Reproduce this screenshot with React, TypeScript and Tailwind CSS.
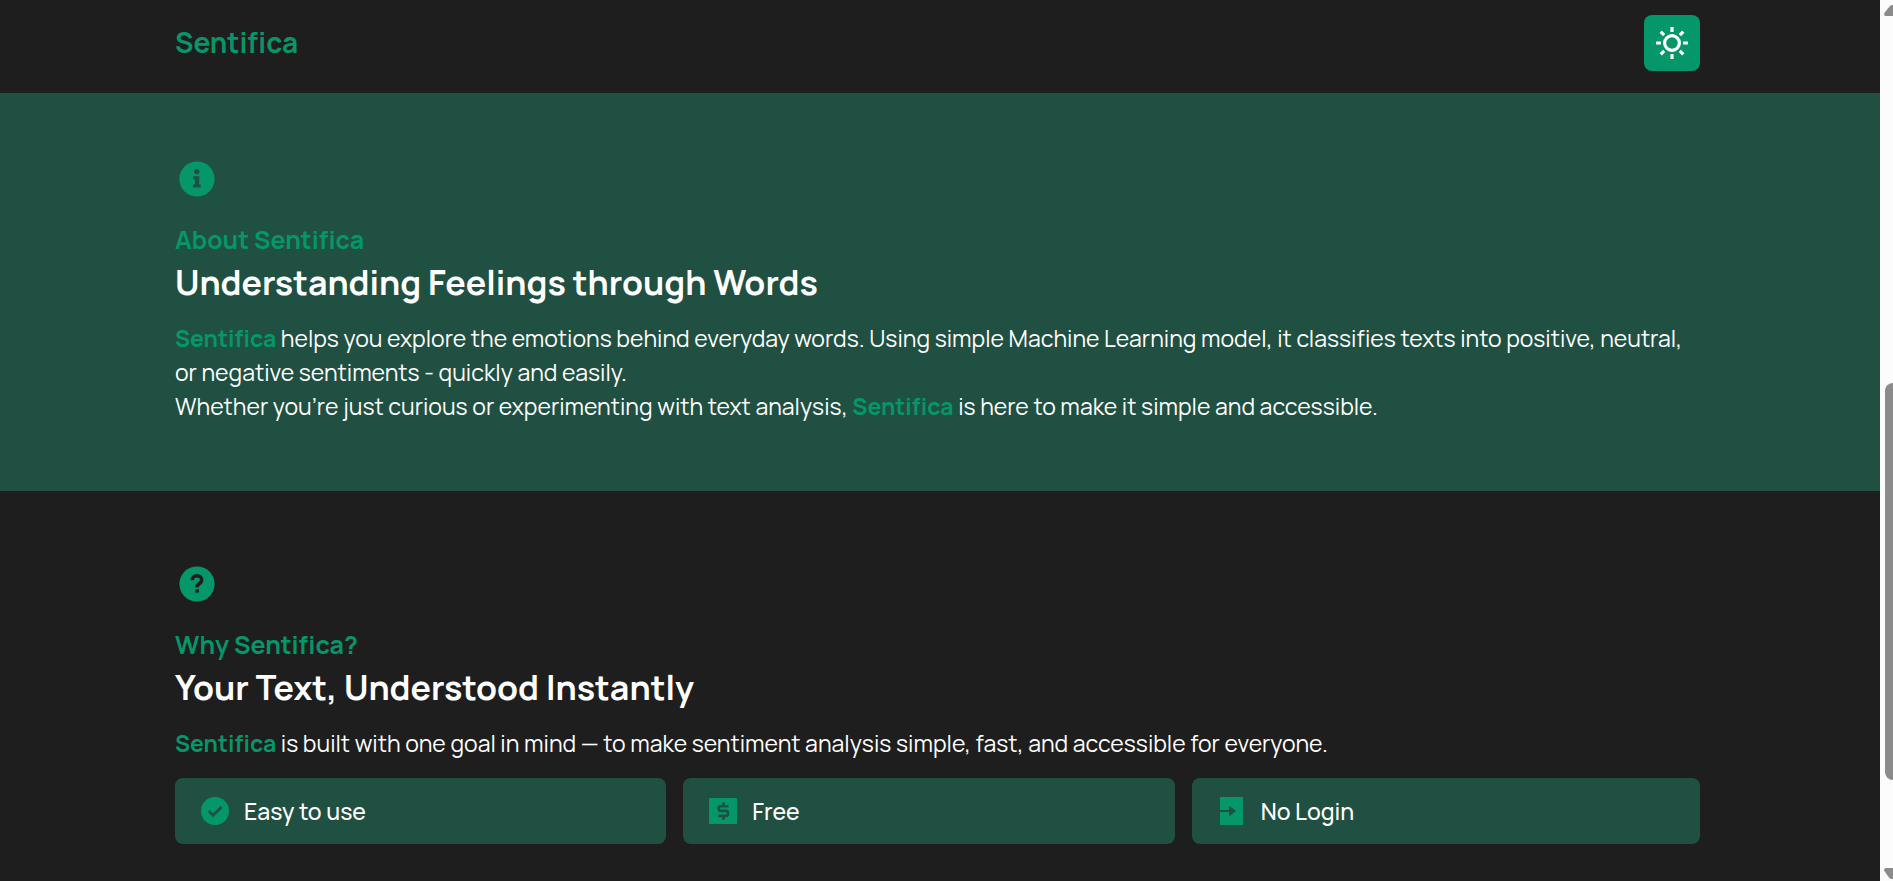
import type { ReactNode } from "react";

function Brand() {
  return <span className="font-bold text-[#059669]">Sentifica</span>;
}

function SunIcon() {
  return (
    <svg viewBox="0 0 32 32" className="size-8" fill="none" stroke="currentColor" strokeWidth="3.2" aria-hidden="true">
      <circle cx="16" cy="16" r="7.4" />
      <path d="M16 0v5M16 27v5M0 16h5M27 16h5M4.7 4.7l3.4 3.4M23.9 23.9l3.4 3.4M4.7 27.3l3.4-3.4M23.9 8.1l3.4-3.4" />
    </svg>
  );
}

function InfoIcon() {
  return (
    <svg viewBox="0 0 36 36" className="mx-1 size-9" aria-hidden="true">
      <circle cx="18" cy="18" r="17.6" fill="#059669" />
      <g fill="#205042">
        <circle cx="17.8" cy="10.6" r="2.7" />
        <path d="M14 15.2h6.200v8.200h1.500v3.200h-7.600v-3.200h1.900v-5h-2z" />
      </g>
    </svg>
  );
}

function HelpIcon() {
  return (
    <svg viewBox="0 0 36 36" className="mx-1 size-9" aria-hidden="true">
      <circle cx="18" cy="18" r="17.6" fill="#059669" />
      <path d="M13.200 14.200c0-2.600 2-4.400 4.700-4.400s4.800 1.700 4.800 4.200c0 3.600-4.700 3.400-4.700 7.400" fill="none" stroke="#1e1e1e" strokeWidth="3.600" />
      <path d="M16.200 23.200h3.700v3.400h-3.700z" fill="#1e1e1e" />
    </svg>
  );
}

function CheckIcon() {
  return (
    <svg viewBox="0 0 28 28" className="size-7" aria-hidden="true">
      <circle cx="14" cy="14" r="14" fill="#059669" />
      <path d="M7.800 14l4.300 4.300 8.500-8.300" fill="none" stroke="#205042" strokeWidth="2.800" />
    </svg>
  );
}

function DollarIcon() {
  return (
    <svg viewBox="0 0 28 28" className="size-7" aria-hidden="true">
      <rect y="1" width="28" height="26" rx="0.6" fill="#059669" />
      <path d="M19.500 9.300h-8c-2.500 0-2.500 4.600 0 4.600h5.500c2.800 0 2.800 5 0 5H9.300M14.500 5.500v4M14.500 18.500v4.200" fill="none" stroke="#205042" strokeWidth="2.600" />
    </svg>
  );
}

function LoginIcon() {
  return (
    <svg viewBox="0 0 28 28" className="size-7" aria-hidden="true">
      <path d="M2 0h23v28H2z" fill="#059669" />
      <path d="M2 12.900h9V8.500l7 5.500-7 5.500v-4.400H2z" fill="#205042" />
    </svg>
  );
}

type SectionProps = { icon: ReactNode; label: string; title: string; tone: string; children: ReactNode };

function Section({ icon, label, title, tone, children }: SectionProps) {
  return (
    <section className={`pr-[180px] pl-[175px] ${tone}`}>
      {icon}
      <p className="mt-6 text-[25px] leading-[38px] font-bold text-[#059669]">{label}</p>
      <h2 className="text-[34px] leading-[46px] font-bold">{title}</h2>
      <div className="mt-4 text-[23px] leading-[34px] font-[450]">{children}</div>
    </section>
  );
}

const features = [
  { name: "Easy to use", icon: <CheckIcon /> },
  { name: "Free", icon: <DollarIcon /> },
  { name: "No Login", icon: <LoginIcon /> },
];

export default function App() {
  return (
    <div className="flex h-screen overflow-hidden bg-[#1e1e1e] font-['Manrope','Inter',sans-serif] text-white">
      <div className="min-w-0 flex-1 overflow-hidden">
        <header className="flex items-start justify-between pt-[15px] pr-[180px] pb-[22px] pl-[175px]">
          <a href="#top" className="text-[28px] leading-[54px]"><Brand /></a>
          <button type="button" aria-label="Switch theme" className="flex size-14 items-center justify-center rounded-lg bg-[#059669]">
            <SunIcon />
          </button>
        </header>
        <main>
          <Section icon={<InfoIcon />} label="About Sentifica" title="Understanding Feelings through Words" tone="bg-[#205042] pt-[68px] pb-[68px]">
            <p>
              <Brand /> helps you explore the emotions behind everyday words. Using simple Machine Learning model, it classifies texts into positive, neutral, or negative sentiments - quickly and easily.
            </p>
            <p>
              Whether you’re just curious or experimenting with text analysis, <Brand /> is here to make it simple and accessible.
            </p>
          </Section>
          <Section icon={<HelpIcon />} label="Why Sentifica?" title="Your Text, Understood Instantly" tone="bg-[#1e1e1e] pt-[75px]">
            <p><Brand /> is built with one goal in mind — to make sentiment analysis simple, fast, and accessible for everyone.</p>
            <ul className="mt-[18px] grid grid-cols-3">
              {features.map((f) => (
                <li key={f.name} className="mr-[17px] flex items-center gap-[15px] rounded-lg bg-[#205042] px-[26px] py-4 last:mr-0">
                  {f.icon}
                  <span className="font-medium">{f.name}</span>
                </li>
              ))}
            </ul>
          </Section>
        </main>
      </div>
      <div className="flex w-[13px] shrink-0 flex-col items-end overflow-hidden bg-[#fcfcfc]" aria-hidden="true">
        <svg viewBox="0 0 9 16" className="h-4 w-[9px] shrink-0" fill="#8b8b8b"><path d="M9 5H8Q6.500 5 5.500 6.500L.4 13Q-.5 16 2 16H9z" /></svg>
        <div className="mt-[367px] h-[397px] w-2 shrink-0 rounded-l-lg bg-[#8b8b8b]" />
        <svg viewBox="0 0 9 13" className="mt-auto h-[13px] w-[9px] shrink-0" fill="#8b8b8b"><path d="M9 0H2Q-.5 0 .4 3L5 9.500Q6.500 11 8 11H9z" /></svg>
      </div>
    </div>
  );
}
